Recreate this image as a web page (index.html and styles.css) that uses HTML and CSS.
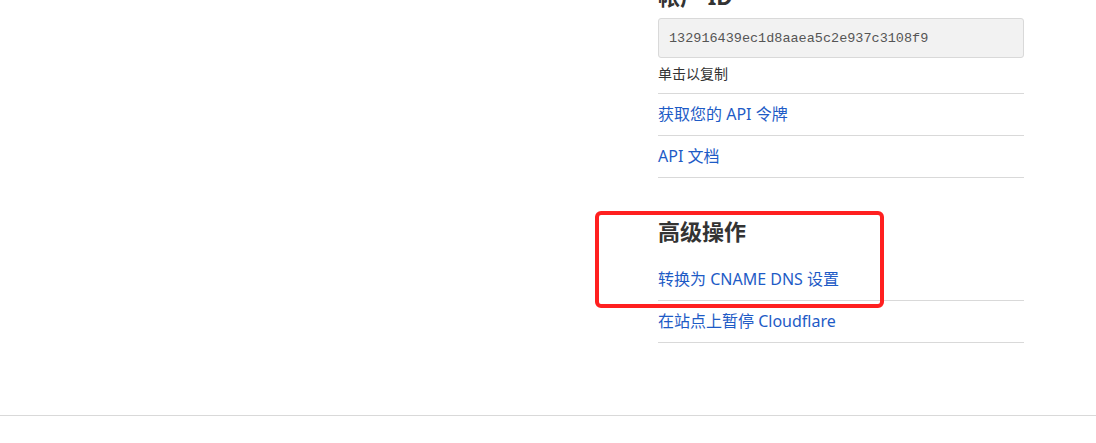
FILE: index.html
```html
<!DOCTYPE html>
<html lang="zh-CN">
<head>
<meta charset="utf-8">
<title>Cloudflare 概述</title>
<link rel="stylesheet" href="styles.css">
</head>
<body>
<div class="page">
  <div class="layout">
    <main class="main"></main>
    <aside class="sidebar">
      <section class="block">
        <h2 class="block-title">帐户 ID</h2>
        <div class="copy-field">132916439ec1d8aaea5c2e937c3108f9</div>
        <p class="hint">单击以复制</p>
        <ul class="link-list bordered">
          <li><a href="#">获取您的 API 令牌</a></li>
          <li><a href="#">API 文档</a></li>
        </ul>
      </section>
      <section class="block advanced">
        <h2 class="block-title">高级操作</h2>
        <ul class="link-list">
          <li><a href="#">转换为 CNAME DNS 设置</a></li>
          <li><a href="#">在站点上暂停 Cloudflare</a></li>
        </ul>
        <div class="highlight"></div>
      </section>
    </aside>
  </div>
  <footer class="footer"></footer>
</div>
</body>
</html>
```

FILE: styles.css
```css
html, body {
  margin: 0;
  padding: 0;
  background: #fff;
}
body {
  font-family: "Noto Sans", "Noto Sans CJK SC", sans-serif;
  color: #333;
  overflow: hidden;
}
.page {
  margin-top: -17px;
}
.layout {
  display: flex;
  justify-content: flex-end;
  padding-right: 72px;
}
.main {
  flex: 1;
}
.sidebar {
  width: 366px;
  display: flex;
  flex-direction: column;
}
.block-title {
  margin: 0;
  font-size: 22px;
  line-height: 26px;
  font-weight: 700;
  color: #333;
}
.copy-field {
  margin-top: 9px;
  height: 40px;
  box-sizing: border-box;
  border: 1px solid #d9d9d9;
  border-radius: 3px;
  background: #f2f2f2;
  padding: 0 10px;
  display: flex;
  align-items: center;
  font-family: "Liberation Mono", monospace;
  font-size: 13.5px;
  color: #555;
}
.hint {
  margin: 6px 0 9px;
  font-size: 14px;
  line-height: 20px;
  color: #333;
}
.link-list {
  list-style: none;
  margin: 0;
  padding: 0;
}
.link-list li {
  padding: 10px 0;
  line-height: 21px;
  font-size: 16px;
  border-bottom: 1px solid #d9d9d9;
}
.link-list.bordered {
  border-top: 1px solid #d9d9d9;
}
.link-list a {
  color: #1e5bc6;
  text-decoration: none;
}
.advanced {
  position: relative;
  margin-top: 40px;
}
.advanced .block-title {
  margin-bottom: 15px;
}
.highlight {
  position: absolute;
  left: -63px;
  top: -7px;
  width: 289px;
  height: 97px;
  box-sizing: border-box;
  border: 4px solid #ff2020;
  border-radius: 6px;
  pointer-events: none;
}
.footer {
  margin-top: 72px;
  border-top: 1px solid #d9d9d9;
}
```
